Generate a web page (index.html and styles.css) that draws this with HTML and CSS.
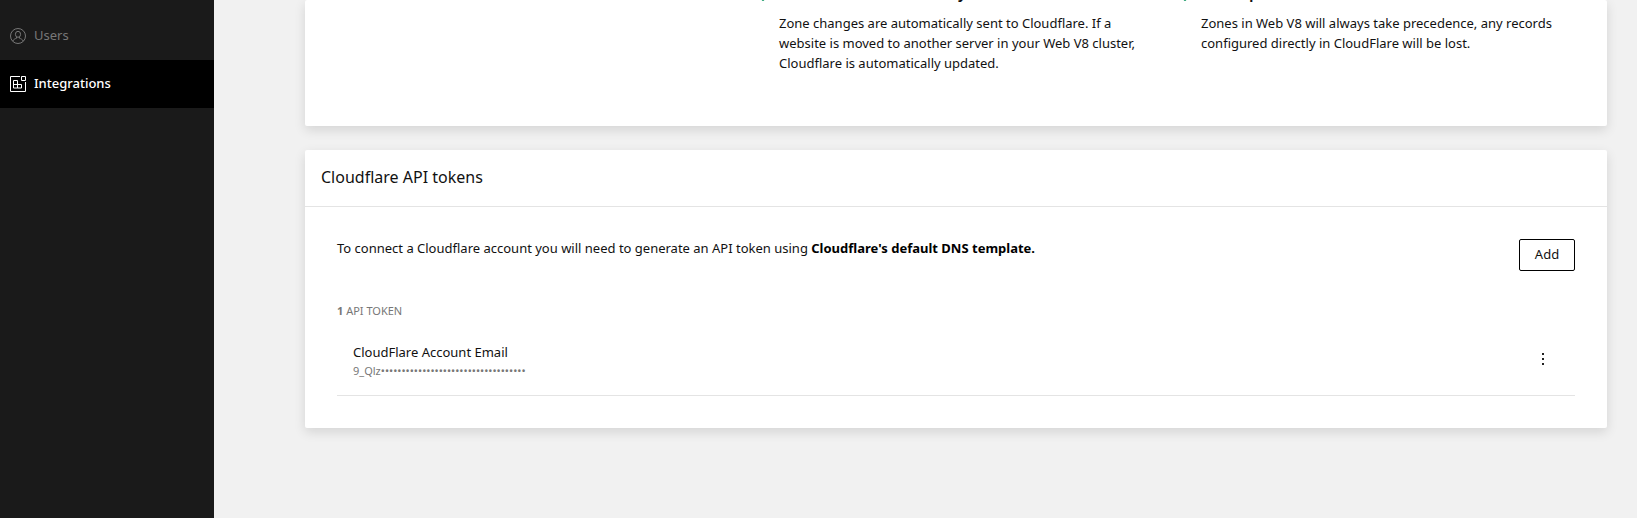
FILE: index.html
```
<!DOCTYPE html>
<html lang="en">

<head>
    <meta charset="UTF-8">
    <meta name="viewport" content="width=device-width, initial-scale=1.0">
    <title>Integrations</title>
    <link rel="stylesheet" href="styles.css">
</head>

<body>
    <nav class="sidebar">
        <a class="nav-item" href="#users">
            <svg class="nav-icon" width="16" height="16" viewBox="0 0 16 16" fill="none" stroke="currentColor">
                <circle cx="8" cy="8" r="7.5" />
                <ellipse cx="8" cy="6.3" rx="2.6" ry="3" />
                <path d="M2.7 13.2C3.4 11.4 5 10.8 6.6 10.2V9M13.3 13.2C12.6 11.4 11 10.8 9.4 10.2V9" />
            </svg>
            <span>Users</span>
        </a>
        <a class="nav-item active" href="#integrations">
            <svg class="nav-icon" width="16" height="16" viewBox="0 0 16 16" fill="none" stroke="currentColor">
                <path d="M10 .5H.5v15h15V6" />
                <path d="M11.5 .5h4v4h-4z" />
                <path d="M3.500 4.500h4v7.500h-4zM3.500 8.500h8v3.500h-4" />
            </svg>
            <span>Integrations</span>
        </a>
    </nav>

    <main class="content">
        <section class="card intro">
            <div class="features">
                <div class="feature">
                    <svg class="check" width="16" height="12" viewBox="0 0 16 12" fill="none" stroke="#1f9d6b" stroke-width="2">
                        <path d="M2 5l6 6L16 3" />
                    </svg>
                    <div>
                        <h3>Zone sent automatically</h3>
                        <p>Zone changes are automatically sent to Cloudflare. If a website is moved to another server in your Web V8 cluster, Cloudflare is automatically updated.</p>
                    </div>
                </div>
                <div class="feature">
                    <svg class="check" width="16" height="12" viewBox="0 0 16 12" fill="none" stroke="#1f9d6b" stroke-width="2">
                        <path d="M2 5l6 6L16 3" />
                    </svg>
                    <div>
                        <h3>Takes precedence</h3>
                        <p>Zones in Web V8 will always take precedence, any records configured directly in CloudFlare will be lost.</p>
                    </div>
                </div>
            </div>
        </section>

        <section class="card">
            <h2 class="card-title">Cloudflare API tokens</h2>
            <div class="card-body">
                <div class="connect">
                    <p>To connect a Cloudflare account you will need to generate an API token using <a href="#template">Cloudflare's default DNS template.</a></p>
                    <button class="btn-add" type="button">Add</button>
                </div>
                <p class="count"><b>1</b> API TOKEN</p>
                <ul class="tokens">
                    <li class="token">
                        <div>
                            <div class="token-name">CloudFlare Account Email</div>
                            <div class="token-key">9_Qlz•••••••••••••••••••••••••••••••••••</div>
                        </div>
                        <button class="btn-more" type="button" aria-label="More">
                            <svg width="2" height="12" viewBox="0 0 2 12" fill="#222">
                                <path d="M0 0h2v2H0zM0 5h2v2H0zM0 10h2v2H0z" />
                            </svg>
                        </button>
                    </li>
                </ul>
            </div>
        </section>
    </main>
</body>

</html>
```
FILE: styles.css
```
* {
    box-sizing: border-box;
}

body {
    display: flex;
    min-height: 100vh;
    margin: 0;
    background: #f1f1f1;
    color: #111;
    font-family: "Noto Sans", sans-serif;
    font-size: 13px;
    line-height: 20px;
}

h2,
h3,
p,
ul {
    margin: 0;
    padding: 0;
}

/* sidebar */
.sidebar {
    flex: 0 0 214px;
    padding-top: 12px;
    background: #1a1a1a;
}

.nav-item {
    display: flex;
    align-items: center;
    gap: 8px;
    height: 48px;
    padding: 0 10px;
    color: #777;
    text-decoration: none;
}

.nav-item span {
    padding-bottom: 2px;
}

.nav-item.active {
    background: #000;
    color: #fff;
    font-weight: 500;
}

/* content */
.content {
    flex: 1;
    padding: 0 30px 0 91px;
}

.card {
    display: flow-root;
    margin-bottom: 24px;
    background: #fff;
    border-radius: 2px;
    box-shadow: 0 4px 12px rgba(0, 0, 0, 0.12);
}

.intro {
    padding: 0 32px 53px 450px;
}

/* the headings are scrolled up under the top edge */
.features {
    display: grid;
    grid-template-columns: 1fr 1fr;
    gap: 24px;
    margin-top: -19px;
}

.feature {
    display: flex;
    gap: 8px;
}

.check {
    flex: none;
    margin-top: 8px;
}

.feature h3 {
    margin-bottom: 10px;
    font-size: 16px;
    font-weight: 600;
    line-height: 22px;
}

.card-title {
    padding: 15px 16px 17px;
    border-bottom: 1px solid #e4e4e4;
    font-size: 16px;
    font-weight: 400;
    line-height: 24px;
}

.card-body {
    padding: 32px;
}

.connect {
    display: flex;
    justify-content: space-between;
    align-items: flex-start;
}

.connect p {
    line-height: 18px;
}

.connect a {
    color: #000;
    font-weight: 700;
    text-decoration: none;
}

.btn-add {
    width: 56px;
    height: 32px;
    padding: 0 0 2px;
    background: #fff;
    border: 1px solid #000;
    border-radius: 2px;
    color: #111;
    font: inherit;
    cursor: pointer;
}

.count {
    margin: 32px 0 8px;
    color: #777;
    font-size: 11px;
    line-height: 16px;
}

.tokens {
    list-style: none;
}

.token {
    display: flex;
    justify-content: space-between;
    align-items: flex-start;
    padding: 16px;
    border-bottom: 1px solid #e4e4e4;
}

.token-name {
    padding-bottom: 2px;
    line-height: 18px;
}

.token-key {
    color: #777;
    font-size: 11px;
    line-height: 16px;
}

.btn-more {
    display: flex;
    align-items: center;
    justify-content: center;
    width: 32px;
    height: 32px;
    padding: 0;
    background: none;
    border: 0;
    cursor: pointer;
}
```
